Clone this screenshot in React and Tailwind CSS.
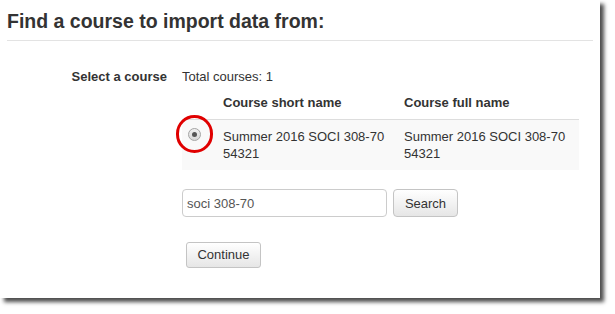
export default function App() {
  return (
    <div className="w-[615px] h-[314px] bg-white" style={{ fontFamily: '"Liberation Sans", Arial, sans-serif' }}>
      <div className="relative w-[600px] h-[298px] bg-white shadow-[4px_4px_4px_rgba(0,0,0,0.7)] text-[#333]">
        {/* title */}
        <div className="mx-[7px] pt-[11px] pb-[8px] border-b border-[#e3e3e3]">
          <h2 className="text-[19.5px] leading-[21px] font-bold text-[#333]">Find a course to import data from:</h2>
        </div>

        <div className="flex mt-[27px] text-[13px] leading-[17px]">
          <div className="w-[167px] text-right font-bold">Select a course</div>
          <div className="ml-[15px] flex-1 pr-[21px]">
            <div>Total courses: 1</div>
            <table className="w-full border-collapse">
              <thead>
                <tr className="border-b border-[#ddd]">
                  <th className="w-[33px]"></th>
                  <th className="text-left font-bold py-[8.5px] px-[8px] w-[181px]">Course short name</th>
                  <th className="text-left font-bold py-[8.5px] px-[8px]">Course full name</th>
                </tr>
              </thead>
              <tbody>
                <tr className="bg-[#f9f9f9]">
                  <td className="align-top pt-[8px] pl-[6px]">
                    <span className="flex items-center justify-center w-[13px] h-[13px] rounded-full border border-[#a6a6a6] bg-gradient-to-b from-[#f0f0f0] to-[#d8d8d8]">
                      <span className="w-[5px] h-[5px] rounded-full bg-[#555]"></span>
                    </span>
                  </td>
                  <td className="py-[8px] px-[8px] align-top">Summer 2016 SOCI 308-70<br />54321</td>
                  <td className="py-[8px] px-[8px] align-top">Summer 2016 SOCI 308-70<br />54321</td>
                </tr>
              </tbody>
            </table>

            <div className="flex items-center gap-[6px] mt-[19px]">
              <div className="w-[205px] h-[28px] border border-[#ccc] rounded-[4px] px-[4px] flex items-center text-[13px] text-[#555]">soci 308-70</div>
              <button className="h-[28px] w-[65px] border border-[#c4c4c4] rounded-[4px] bg-gradient-to-b from-[#fff] to-[#e6e6e6] text-[13px] text-[#333]">Search</button>
            </div>

            <button className="mt-[25px] ml-[4px] h-[26px] w-[75px] border border-[#c4c4c4] rounded-[3px] bg-gradient-to-b from-[#fff] to-[#e6e6e6] text-[13px] leading-[15px] pb-[2px] text-[#333]">Continue</button>
          </div>
        </div>

        {/* red annotation circle */}
        <div className="absolute left-[176px] top-[115px] w-[37px] h-[38px] rounded-full border-[3px] border-[#e00000]"></div>
      </div>
    </div>
  );
}
